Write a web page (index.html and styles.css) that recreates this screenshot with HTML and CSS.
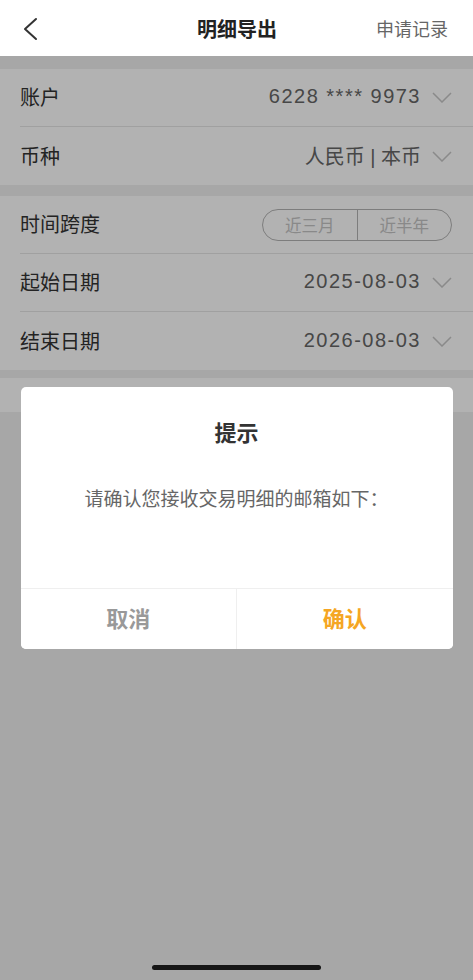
FILE: index.html
```html
<!DOCTYPE html>
<html lang="zh-CN">
<head>
    <meta charset="UTF-8">
    <meta name="viewport" content="width=device-width, initial-scale=1.0">
    <title>明细导出</title>
    <link rel="stylesheet" href="styles.css">
</head>
<body>
    <div class="screen">
        <div class="header">
            <div class="back">
                <svg width="16" height="24" viewBox="0 0 16 24"><polyline points="14,2 3,12 14,22" fill="none" stroke="#333" stroke-width="2" stroke-linecap="round" stroke-linejoin="round"/></svg>
            </div>
            <div class="title">明细导出</div>
            <div class="records">申请记录</div>
        </div>

        <div class="main">
            <div class="card">
                <div class="row">
                    <span class="label">账户</span>
                    <span class="value num">6228 **** 9973</span>
                    <svg class="arrow" width="20" height="11" viewBox="0 0 20 11"><polyline points="1,1 10,10 19,1" fill="none" stroke="#c6c6c6" stroke-width="1.5"/></svg>
                </div>
                <div class="row">
                    <span class="label">币种</span>
                    <span class="value">人民币 | 本币</span>
                    <svg class="arrow" width="20" height="11" viewBox="0 0 20 11"><polyline points="1,1 10,10 19,1" fill="none" stroke="#c6c6c6" stroke-width="1.5"/></svg>
                </div>
            </div>

            <div class="card">
                <div class="row">
                    <span class="label">时间跨度</span>
                    <div class="segment">
                        <span class="seg">近三月</span>
                        <span class="seg">近半年</span>
                    </div>
                </div>
                <div class="row">
                    <span class="label">起始日期</span>
                    <span class="value num">2025-08-03</span>
                    <svg class="arrow" width="20" height="11" viewBox="0 0 20 11"><polyline points="1,1 10,10 19,1" fill="none" stroke="#c6c6c6" stroke-width="1.5"/></svg>
                </div>
                <div class="row">
                    <span class="label">结束日期</span>
                    <span class="value num">2026-08-03</span>
                    <svg class="arrow" width="20" height="11" viewBox="0 0 20 11"><polyline points="1,1 10,10 19,1" fill="none" stroke="#c6c6c6" stroke-width="1.5"/></svg>
                </div>
            </div>

            <div class="card small"></div>

            <div class="mask">
                <div class="dialog">
                    <div class="dialog-body">
                        <div class="dialog-title">提示</div>
                        <div class="dialog-text">请确认您接收交易明细的邮箱如下：</div>
                    </div>
                    <div class="dialog-btns">
                        <button class="dbtn cancel">取消</button>
                        <button class="dbtn ok">确认</button>
                    </div>
                </div>
                <div class="home-bar"></div>
            </div>
        </div>
    </div>
</body>
</html>
```

FILE: styles.css
```css
body {
    margin: 0;
    font-family: "Liberation Sans", "Noto Sans CJK SC", sans-serif;
    background-color: #efefef;
}

.screen {
    width: 473px;
    height: 980px;
    display: flex;
    flex-direction: column;
    overflow: hidden;
}

.header {
    height: 56px;
    background-color: #fff;
    display: flex;
    align-items: center;
    position: relative;
    padding: 0 25px 0 22px;
    box-sizing: border-box;
    flex-shrink: 0;
}

.back {
    width: 16px;
    height: 24px;
    margin-top: 2px;
}

.title {
    flex: 1;
    text-align: center;
    font-size: 20px;
    font-weight: bold;
    color: #222;
    padding-left: 60px;
}

.records {
    font-size: 18px;
    color: #666;
}

.main {
    flex: 1;
    position: relative;
    padding-top: 13px;
}

.card {
    background-color: #fff;
    margin-bottom: 11px;
}

.card.small {
    height: 34px;
    margin-top: -3px;
}

.row {
    height: 58px;
    display: flex;
    align-items: center;
    margin-left: 20px;
    padding-right: 21px;
    border-bottom: 1px solid #e6e6e6;
    box-sizing: border-box;
}

.row:last-child {
    border-bottom: none;
}

.label {
    flex: 1;
    font-size: 20px;
    color: #333;
    margin-top: -2px;
}

.value {
    font-size: 20px;
    color: #666;
    margin-right: 11px;
    margin-top: -2px;
}

.num {
    letter-spacing: 1.5px;
}

.arrow {
    display: block;
}

.segment {
    display: flex;
    width: 190px;
    height: 32px;
    border: 1px solid #b4b4b4;
    border-radius: 16px;
    box-sizing: border-box;
    overflow: hidden;
}

.seg {
    flex: 1;
    display: flex;
    align-items: center;
    justify-content: center;
    font-size: 16.5px;
    color: #c4c4c4;
}

.seg + .seg {
    border-left: 1px solid #b4b4b4;
}

.mask {
    position: absolute;
    top: 0;
    left: 0;
    right: 0;
    bottom: 0;
    background-color: rgba(0, 0, 0, 0.3);
    display: flex;
    align-items: center;
    justify-content: center;
}

.dialog {
    width: 432px;
    background-color: #fff;
    border-radius: 5px;
    overflow: hidden;
}

.dialog-body {
    height: 201px;
    padding: 34px 20px 0;
    box-sizing: border-box;
    text-align: center;
}

.dialog-title {
    font-size: 22px;
    line-height: 26px;
    font-weight: bold;
    color: #333;
}

.dialog-text {
    margin-top: 40px;
    font-size: 19px;
    line-height: 26px;
    color: #666;
}

.dialog-btns {
    display: flex;
    height: 60px;
    border-top: 1px solid #efefef;
}

.dbtn {
    flex: 1;
    border: none;
    background: #fff;
    font-family: "Liberation Sans", "Noto Sans CJK SC", sans-serif;
    font-size: 22px;
    font-weight: bold;
    padding: 0 0 5px;
}

.dbtn + .dbtn {
    border-left: 1px solid #efefef;
}

.cancel {
    color: #999;
}

.ok {
    color: #f5a623;
}

.home-bar {
    position: absolute;
    bottom: 10px;
    left: 152px;
    width: 169px;
    height: 5px;
    border-radius: 3px;
    background-color: #161616;
}
```
